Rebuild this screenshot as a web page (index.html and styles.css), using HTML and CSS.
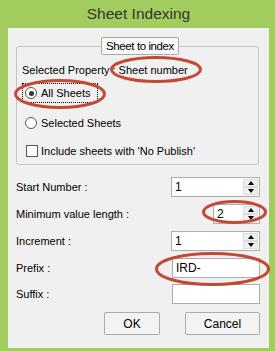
FILE: index.html
```html
<!DOCTYPE html>
<html lang="en">
<head>
  <meta charset="UTF-8">
  <title>Sheet Indexing</title>
  <link rel="stylesheet" href="styles.css">
</head>
<body>
  <div class="window">
    <div class="title">Sheet Indexing</div>
    <div class="client">
      <fieldset class="group">
        <legend>Sheet to index</legend>
        <div class="row prop">Selected Property : Sheet number</div>
        <label class="row option focus"><span class="radio checked"></span>All Sheets</label>
        <label class="row option"><span class="radio"></span>Selected Sheets</label>
        <label class="row option"><span class="check"></span>Include sheets with 'No Publish'</label>
      </fieldset>

      <div class="fields">
        <div class="field">
          <span>Start Number :</span>
          <div class="spin wide"><span class="val">1</span><span class="arrows"><span class="up"></span><span class="down"></span></span></div>
        </div>
        <div class="field">
          <span>Minimum value length :</span>
          <div class="spin narrow"><span class="val">2</span><span class="arrows"><span class="up"></span><span class="down"></span></span></div>
        </div>
        <div class="field">
          <span>Increment :</span>
          <div class="spin wide"><span class="val">1</span><span class="arrows"><span class="up"></span><span class="down"></span></span></div>
        </div>
        <div class="field">
          <span>Prefix :</span>
          <div class="text">IRD-</div>
        </div>
        <div class="field">
          <span>Suffix :</span>
          <div class="text"></div>
        </div>
      </div>

      <div class="buttons">
        <button class="ok">OK</button>
        <button class="cancel">Cancel</button>
      </div>
    </div>

    <!-- red marks drawn over the dialog -->
    <svg class="marks" width="275" height="351" viewBox="0 0 275 351">
      <g fill="none" stroke="#c24a35" stroke-width="3">
        <ellipse cx="156" cy="69.5" rx="44.5" ry="12"/>
        <ellipse cx="60" cy="94" rx="44.5" ry="13.5"/>
        <ellipse cx="234.5" cy="212" rx="31" ry="10.5"/>
        <ellipse cx="212.5" cy="269" rx="56" ry="15.5"/>
      </g>
    </svg>
  </div>
</body>
</html>
```

FILE: styles.css
```css
body {
  margin: 0;
  font-family: 'Liberation Sans', Arial, sans-serif;
  font-size: 11px;
  color: #000;
}
.window {
  position: relative;
  width: 275px;
  height: 351px;
  background-color: #a2cc5e;
  padding: 0 6px 3px 8px;
  box-sizing: border-box;
  display: flex;
  flex-direction: column;
}
.title {
  height: 28px;
  line-height: 28px;
  text-align: center;
  font-size: 15.5px;
  color: #333;
  flex-shrink: 0;
}
.client {
  flex: 1;
  background-color: #f0f0f0;
  overflow: hidden;
}
.group {
  margin: 9px 10px 0 8px;
  padding: 0 0 3px 5px;
  border: 1px solid #c5c5c5;
  border-radius: 3px;
  min-width: 0;
}
.group legend {
  margin: 0 auto;
  height: 18px;
  line-height: 16px;
  padding: 0 4px;
  border: 1px solid #a9a9a9;
  border-radius: 2px;
  background-color: #f9f9f9;
  box-sizing: border-box;
  font-size: 11.5px;
  letter-spacing: -0.4px;
}
.row {
  display: flex;
  align-items: center;
}
.prop {
  height: 16px;
  margin-top: 7px;
}
.option {
  height: 20px;
  width: max-content;
  padding: 0 6px 0 2px;
  border: 1px dotted transparent;
  box-sizing: border-box;
  margin-top: 10px;
  margin-left: 0;
}
.focus {
  border-color: #000;
  margin-top: 5px;
}
.option:last-child {
  margin-top: 8px;
}
.radio {
  width: 12px;
  height: 12px;
  border: 1px solid #555;
  border-radius: 50%;
  background-color: #fff;
  box-sizing: border-box;
  margin-right: 4px;
  display: flex;
  align-items: center;
  justify-content: center;
}
.radio.checked::after {
  content: "";
  width: 5px;
  height: 5px;
  border-radius: 50%;
  background-color: #333;
}
.check {
  width: 12px;
  height: 12px;
  border: 1px solid #555;
  background-color: #fff;
  box-sizing: border-box;
  margin-left: 1px;
  margin-right: 3px;
}
.fields {
  padding: 12px 9px 0 8px;
}
.field {
  display: flex;
  justify-content: space-between;
  align-items: center;
  height: 20px;
  margin-bottom: 7px;
}
.field:nth-child(4) {
  margin-bottom: 6px;
}
.spin, .text {
  height: 20px;
  border: 1px solid #abadb3;
  background-color: #fff;
  box-sizing: border-box;
  display: flex;
  font-size: 12px;
}
.wide {
  width: 89px;
}
.narrow {
  width: 47px;
}
.text {
  width: 88px;
  padding-left: 3px;
  line-height: 18px;
}
.val {
  flex: 1;
  padding-left: 3px;
  line-height: 18px;
}
.arrows {
  width: 15px;
  display: flex;
  flex-direction: column;
  padding: 1px 1px 1px 0;
}
.arrows span {
  flex: 1;
  background-color: #f0f0f0;
  border: 1px solid #dcdcdc;
  display: flex;
  align-items: center;
  justify-content: center;
}
.arrows .up::after {
  content: "";
  border-left: 3px solid transparent;
  border-right: 3px solid transparent;
  border-bottom: 4px solid #000;
}
.arrows .down::after {
  content: "";
  border-left: 3px solid transparent;
  border-right: 3px solid transparent;
  border-top: 4px solid #000;
}
.buttons {
  display: flex;
  justify-content: flex-end;
  gap: 25px;
  padding: 1px 9px 0 0;
}
button {
  height: 23px;
  font-family: inherit;
  font-size: 12px;
  color: #000;
  background-color: #f3f3f3;
  border: 1px solid #acacac;
  border-radius: 2px;
  padding: 0;
}
.ok {
  width: 56px;
}
.cancel {
  width: 75px;
}
.marks {
  position: absolute;
  top: 0;
  left: 0;
  pointer-events: none;
}
```
